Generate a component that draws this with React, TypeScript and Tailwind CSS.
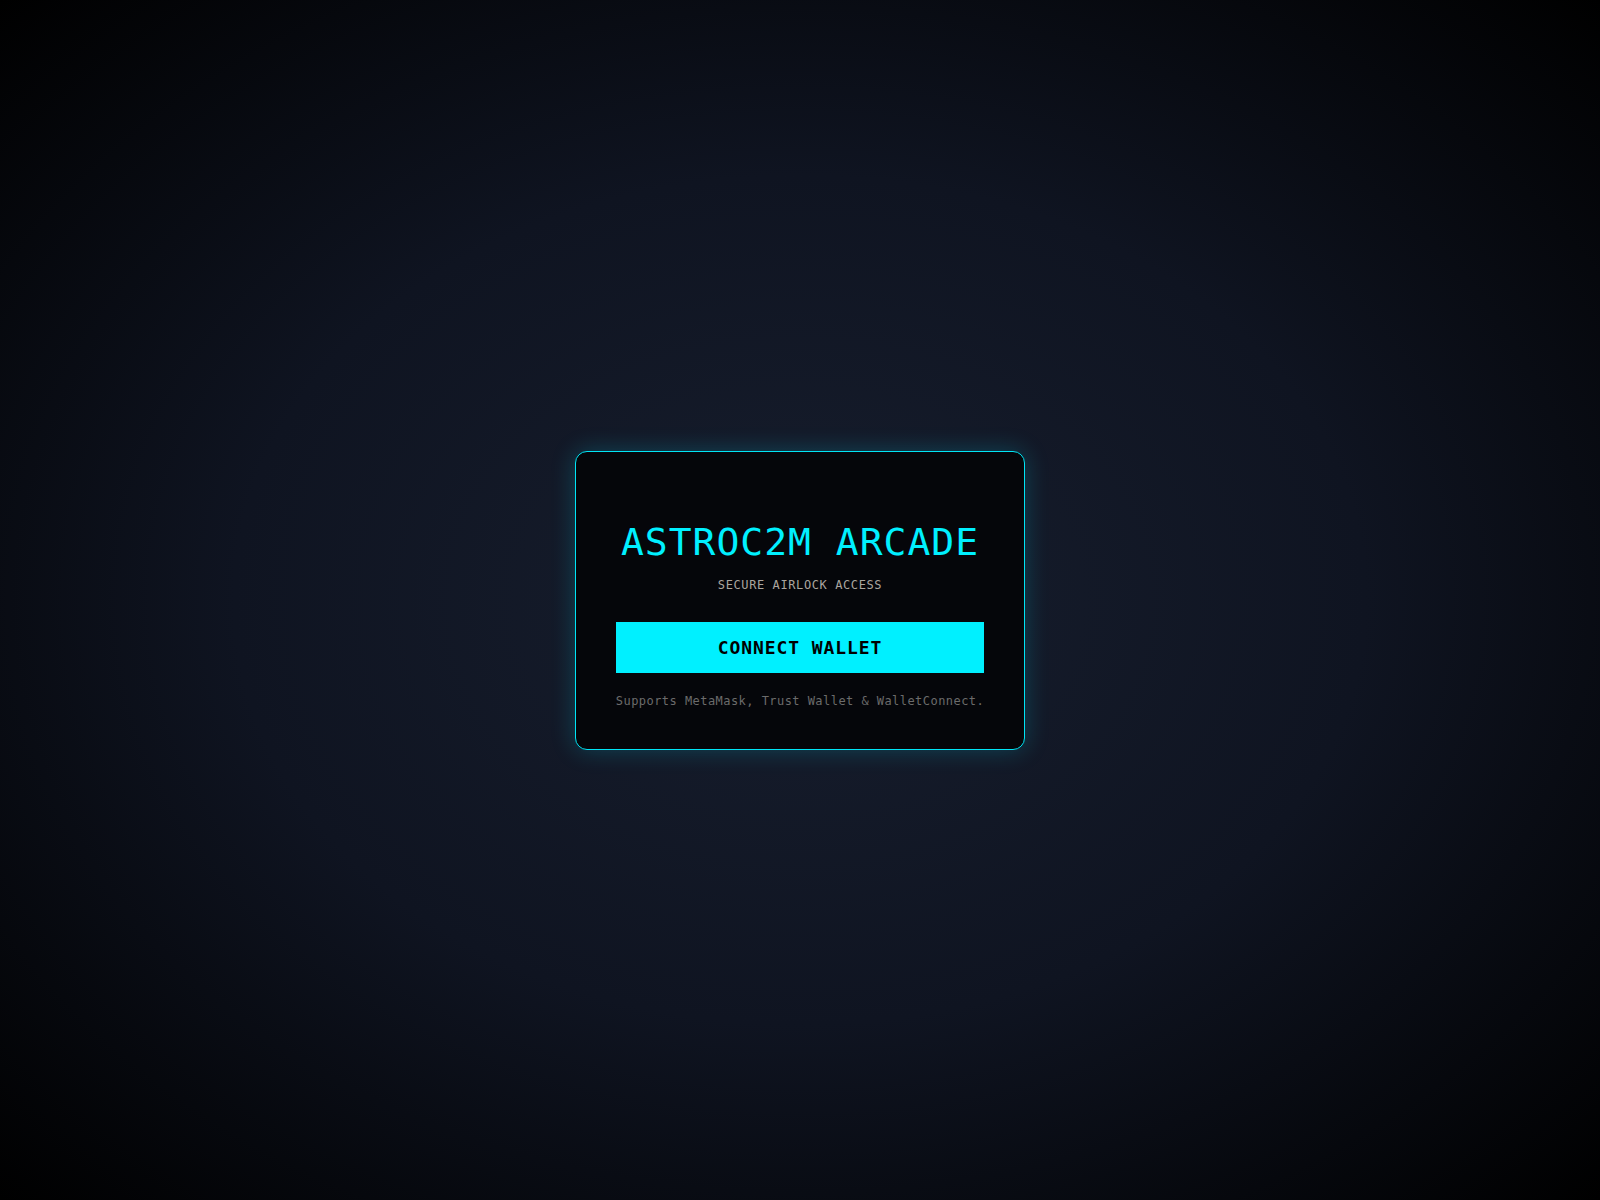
import React from "react";

const App = () => {
  return (
    <div className="w-full h-screen flex items-center justify-center bg-[radial-gradient(ellipse_at_center,_#171e2e_0%,_#0f1421_50%,_#000000_100%)] font-['DejaVu_Sans_Mono',monospace]">
      {/* card */}
      <div className="w-[450px] px-10 pt-[69px] pb-10 flex flex-col items-center rounded-xl border border-[#00e5f5] bg-[#05060a] shadow-[0_0_24px_rgba(0,229,255,0.22)]">
        <h1 className="text-[38px] leading-[42px] tracking-[1px] text-[#00f0ff] whitespace-nowrap">
          ASTROC2M ARCADE
        </h1>
        <p className="mt-[13px] text-xs leading-[18px] tracking-wider text-[#aaa59f]">
          SECURE AIRLOCK ACCESS
        </p>

        <button className="mt-7 w-full py-3 bg-[#00f0ff] text-black text-lg leading-[27px] font-bold tracking-wider">
          CONNECT WALLET
        </button>

        <p className="mt-5 text-xs leading-4 tracking-[0.45px] text-[#6b6b6b] whitespace-nowrap">
          Supports MetaMask, Trust Wallet &amp; WalletConnect.
        </p>
      </div>
      {/* card */}
    </div>
  );
};

export default App;
